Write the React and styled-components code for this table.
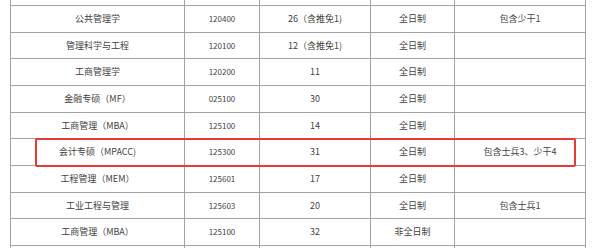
import React from "react";
import styled, { createGlobalStyle } from "styled-components";

const Global = createGlobalStyle`
  html, body { margin: 0; padding: 0; background: #fff; }
  body { font-family: "Noto Sans CJK SC", "Noto Sans", sans-serif; }
`;

const Page = styled.div`
  width: 600px;
  height: 248px;
  overflow: hidden;
  padding-left: 10px;
  box-sizing: border-box;
`;

const Wrap = styled.div`
  position: relative;
  width: 575px;
`;

const Table = styled.table`
  border-collapse: collapse;
  table-layout: fixed;
  width: 575px;
  font-size: 9px;
  color: #3f3f3f;
`;

const Cell = styled.td`
  border: 1px solid #a3a3a3;
  text-align: center;
  vertical-align: middle;
  padding: 0;
  height: ${(p) => p.$h}px;
  line-height: 12px;
  white-space: nowrap;
  border-top: ${(p) => (p.$noTop ? "none" : "1px solid #a3a3a3")};
`;

const Num = styled.span`
  font-size: 8px;
`;

const Highlight = styled.div`
  position: absolute;
  left: 25px;
  top: 138px;
  width: 541px;
  height: 29px;
  box-sizing: border-box;
  border: 2px solid #e83a35;
  border-radius: 2px;
  pointer-events: none;
`;

const rows = [
  ["公共管理学", "120400", "26（含推免1)", "全日制", "包含少干1"],
  ["管理科学与工程", "120100", "12（含推免1)", "全日制", ""],
  ["工商管理学", "120200", "11", "全日制", ""],
  ["金融专硕（MF）", "025100", "30", "全日制", ""],
  ["工商管理（MBA）", "125100", "14", "全日制", ""],
  ["会计专硕（MPACC)", "125300", "31", "全日制", "包含士兵3、少干4"],
  ["工程管理（MEM）", "125601", "17", "全日制", ""],
  ["工业工程与管理", "125603", "20", "全日制", "包含士兵1"],
  ["工商管理（MBA）", "125100", "32", "非全日制", ""],
];

const heights = [26, 26, 26, 26, 26, 26, 26, 26, 26];
const lineYs = [6, 33, 59, 86, 113, 139, 166, 193, 219, 246];

export default function App() {
  return (
    <Page>
      <Global />
      <Wrap>
        <Table>
          <colgroup>
            <col style={{ width: 174 }} />
            <col style={{ width: 75 }} />
            <col style={{ width: 111 }} />
            <col style={{ width: 84 }} />
            <col style={{ width: 131 }} />
          </colgroup>
          <tbody>
            <tr>
              {[0, 1, 2, 3, 4].map((i) => (
                <Cell key={i} $h={5} $noTop />
              ))}
            </tr>
            {rows.map((r, i) => (
              <tr key={i}>
                <Cell $h={lineYs[i + 1] - lineYs[i] - 1}>{r[0]}</Cell>
                <Cell $h={lineYs[i + 1] - lineYs[i] - 1}><Num>{r[1]}</Num></Cell>
                <Cell $h={lineYs[i + 1] - lineYs[i] - 1}>{r[2]}</Cell>
                <Cell $h={lineYs[i + 1] - lineYs[i] - 1}>{r[3]}</Cell>
                <Cell $h={lineYs[i + 1] - lineYs[i] - 1}>{r[4]}</Cell>
              </tr>
            ))}
            <tr>
              {[0, 1, 2, 3, 4].map((i) => (
                <Cell key={i} $h={10} />
              ))}
            </tr>
          </tbody>
        </Table>
        <Highlight />
      </Wrap>
    </Page>
  );
}
